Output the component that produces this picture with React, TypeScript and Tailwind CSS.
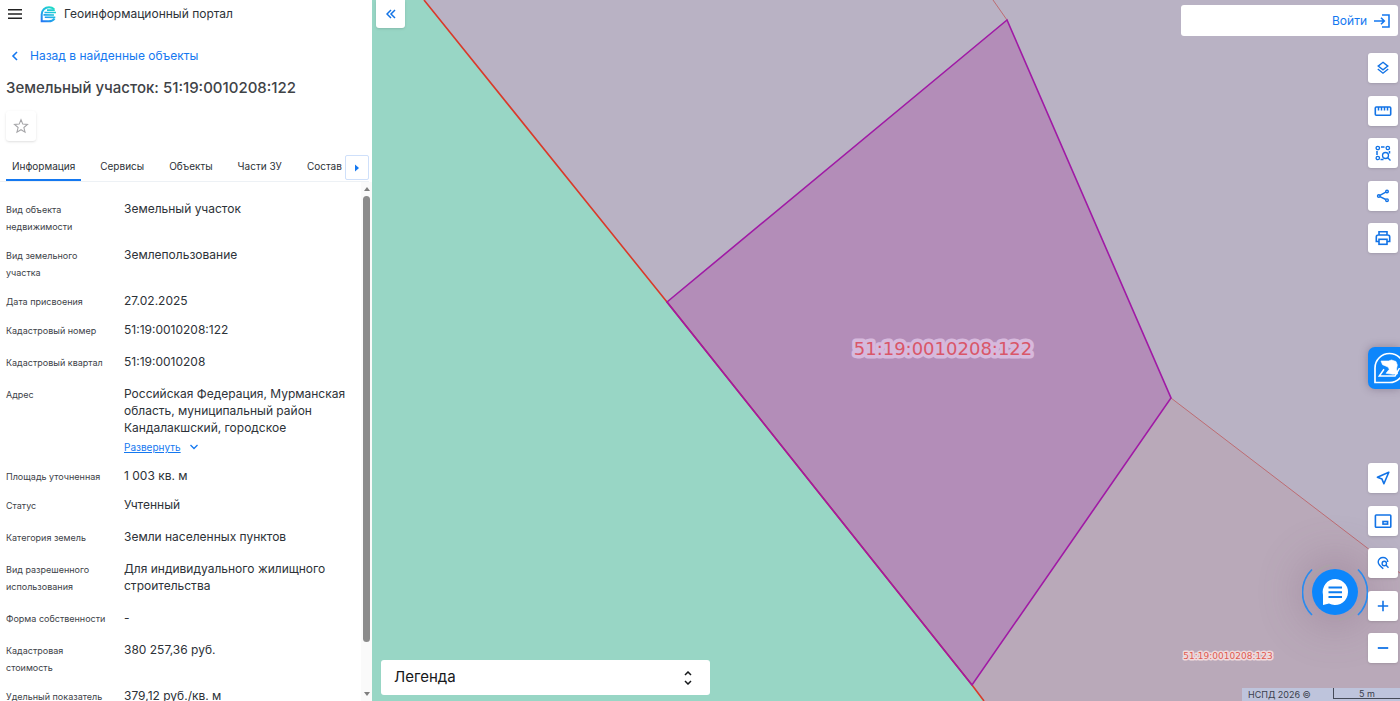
import type { ReactNode } from 'react';

const FONT = "font-['Inter','Noto_Sans',sans-serif]";

type Row = { label: string; value: string; height: string; more?: boolean };

const rows: Row[] = [
  { label: 'Вид объекта недвижимости', value: 'Земельный участок', height: 'min-h-[46px]' },
  { label: 'Вид земельного участка', value: 'Землепользование', height: 'min-h-[46px]' },
  { label: 'Дата присвоения', value: '27.02.2025', height: 'min-h-[29px]' },
  { label: 'Кадастровый номер', value: '51:19:0010208:122', height: 'min-h-8' },
  { label: 'Кадастровый квартал', value: '51:19:0010208', height: 'min-h-8' },
  {
    label: 'Адрес',
    value: 'Российская Федерация, Мурманская область, муниципальный район Кандалакшский, городское',
    height: 'min-h-[82px]',
    more: true,
  },
  { label: 'Площадь уточненная', value: '1 003 кв. м', height: 'min-h-[29px]' },
  { label: 'Статус', value: 'Учтенный', height: 'min-h-8' },
  { label: 'Категория земель', value: 'Земли населенных пунктов', height: 'min-h-8' },
  {
    label: 'Вид разрешенного использования',
    value: 'Для индивидуального жилищного строительства',
    height: 'min-h-[49px]',
  },
  { label: 'Форма собственности', value: '-', height: 'min-h-8' },
  { label: 'Кадастровая стоимость', value: '380 257,36 руб.', height: 'min-h-[46px]' },
  { label: 'Удельный показатель', value: '379,12 руб./кв. м', height: 'min-h-[46px]' },
];

const tabs = ['Информация', 'Сервисы', 'Объекты', 'Части ЗУ', 'Состав'];

function Stroke({ children, className = 'size-5', width = 1.5 }: { children: ReactNode; className?: string; width?: number }) {
  return (
    <svg viewBox="0 0 20 20" className={className} fill="none" stroke="currentColor" strokeWidth={width} aria-hidden="true">
      {children}
    </svg>
  );
}

function Logo() {
  return (
    <svg viewBox="0 0 17 17" className="size-[17px] shrink-0" fill="none" aria-hidden="true">
      <defs>
        <linearGradient id="logo" x1="14" y1="1" x2="3" y2="16" gradientUnits="userSpaceOnUse">
          <stop offset="0" stopColor="#1fe0c0" />
          <stop offset="0.5" stopColor="#20b5e6" />
          <stop offset="1" stopColor="#2478f5" />
        </linearGradient>
      </defs>
      <path d="M14.2 3.2C12.8 1.9 11 1.200 9 1.200 4.900 1.200 1.700 4.300 1.700 8.500V15.300H8.800C11.300 15.300 13.300 14.300 14.600 12.600" stroke="url(#logo)" strokeWidth="2" />
      <path d="M7 4.100 14.800 4.150M4.500 6.500 16 6.550M3.500 8.900 14 8.950M4.800 11.300 15.300 11.350" stroke="url(#logo)" strokeWidth="1.600" />
    </svg>
  );
}

const topTools: { label: string; icon: ReactNode }[] = [
  {
    label: 'Слои',
    icon: (
      <Stroke width={1.4}>
        <path d="M10 4.300 14.800 8.100 10 11.900 5.200 8.100ZM4.800 11 10 15.200 15.200 11" />
      </Stroke>
    ),
  },
  {
    label: 'Измерения',
    icon: (
      <Stroke width={1.6}>
        <rect x="2.300" y="6" width="15.400" height="8.300" rx="1" />
        <path d="M5.500 6V9.500M8.500 6V9.500M11.500 6V9.500M14.500 6V9.500" strokeWidth="1.500" />
      </Stroke>
    ),
  },
  {
    label: 'Поиск по области',
    icon: (
      <Stroke width={1.3}>
        <circle cx="4.800" cy="5" r="1.700" />
        <circle cx="14.800" cy="5" r="1.700" />
        <circle cx="4.800" cy="15" r="1.700" />
        <path d="M8 4H11.500M4 8V12M16.500 8V10.500M7.500 16.500H10.500" strokeWidth="1.500" />
        <circle cx="12.500" cy="12.500" r="3" />
        <path d="M14.700 14.700 17.500 17.500" />
      </Stroke>
    ),
  },
  {
    label: 'Поделиться',
    icon: (
      <Stroke width={1.4}>
        <circle cx="5.800" cy="10" r="1.300" />
        <circle cx="14" cy="5.500" r="1.300" />
        <circle cx="14" cy="14.200" r="1.300" />
        <path d="M6.900 9.300 12.800 6.200M6.900 10.700 12.800 13.500" />
      </Stroke>
    ),
  },
  {
    label: 'Печать',
    icon: (
      <Stroke width={1.6}>
        <path d="M6 7V3.700H14V7M6 13.500H3.300V9C3.300 7.700 4 7 5.200 7H14.800C16 7 16.700 7.700 16.700 9V13.500H14" />
        <rect x="6" y="11.300" width="8" height="5" />
      </Stroke>
    ),
  },
];

const bottomTools: { label: string; icon: ReactNode }[] = [
  {
    label: 'Моё местоположение',
    icon: (
      <Stroke width={1.6}>
        <path d="M15.800 4.300 4.400 9.200 9 11.100 10.900 15.700Z" strokeLinejoin="round" />
      </Stroke>
    ),
  },
  {
    label: 'Обзорная карта',
    icon: (
      <Stroke width={1.6}>
        <rect x="2.400" y="4" width="15.400" height="12.300" rx="0.800" />
        <rect x="10" y="10.500" width="4.600" height="2.600" />
      </Stroke>
    ),
  },
  {
    label: 'Поиск на карте',
    icon: (
      <Stroke width={1.4}>
        <path d="M10.300 15.700C8.500 14.300 5.200 12 5.200 9.100 5.200 6.400 7.400 4.500 10 4.500S14.800 6.400 14.800 9.100" />
        <circle cx="11.300" cy="10.500" r="2.200" />
        <path d="M12.900 12.100 15.500 14.800" />
      </Stroke>
    ),
  },
  {
    label: 'Приблизить',
    icon: (
      <Stroke width={1.6}>
        <path d="M10 4.800V15.200M4.800 10H15.200" />
      </Stroke>
    ),
  },
  {
    label: 'Отдалить',
    icon: (
      <Stroke width={1.800}>
        <path d="M4.800 10H15.200" />
      </Stroke>
    ),
  },
];

function ToolButton({ label, children }: { label: string; children: ReactNode }) {
  return (
    <button
      type="button"
      aria-label={label}
      className="flex size-[30px] items-center justify-center rounded-[3px] bg-white text-[#1273e6] shadow-sm"
    >
      {children}
    </button>
  );
}

function Sidebar() {
  return (
    <aside className="flex h-full w-[372px] shrink-0 flex-col bg-white text-[#2d3238]">
      <header className="flex h-7 shrink-0 items-center pl-2">
        <button type="button" aria-label="Меню" className="mr-[18px] text-[#222]">
          <svg viewBox="0 0 14 10" className="h-[10px] w-[14px]" fill="currentColor" aria-hidden="true">
            <path d="M0 0H14V1.600H0ZM0 4.200H14V5.800H0ZM0 8.400H14V10H0Z" />
          </svg>
        </button>
        <Logo />
        <span className="ml-[7px] text-[12px] leading-5">Геоинформационный портал</span>
      </header>

      <a href="#results" className="mt-[18px] flex h-5 shrink-0 items-center pl-[11px] text-[12px] leading-5 text-[#1478f0]">
        <svg viewBox="0 0 8 10" className="mr-[11px] h-[10px] w-2" fill="none" stroke="currentColor" strokeWidth="1.600" aria-hidden="true">
          <path d="M6 1 2 5 6 9" />
        </svg>
        Назад в найденные объекты
      </a>

      <h1 className="mt-[10px] shrink-0 pl-[6px] text-[15px] leading-6 font-medium text-[#3f4347]">
        Земельный участок: 51:19:0010208:122
      </h1>

      <button
        type="button"
        aria-label="В избранное"
        className="mt-[11px] ml-[6px] flex size-[30px] shrink-0 items-center justify-center rounded-[3px] bg-white text-[#a5a5a8] shadow-sm"
      >
        <svg viewBox="0 0 20 20" className="size-[18px]" fill="none" stroke="currentColor" strokeWidth="1.200" aria-hidden="true">
          <path d="M10 3 12 7.900 17.200 8.300 13.200 11.700 14.500 16.900 10 14.100 5.500 16.900 6.800 11.700 2.800 8.300 8 7.900Z" />
        </svg>
      </button>

      <div className="mt-[13px] mr-[3px] flex h-7 shrink-0 items-stretch border-b border-[#edf1f5]">
        <div role="tablist" className="flex flex-1 items-stretch overflow-hidden pl-[6px] text-[10px] leading-4 whitespace-nowrap">
          {tabs.map((tab, i) => (
            <button
              key={tab}
              type="button"
              role="tab"
              aria-selected={i === 0}
              className={
                i === 0
                  ? 'mr-[13px] shrink-0 border-b-2 border-[#1478f0] px-[6px] pb-[2px]'
                  : 'mr-[13px] shrink-0 border-b-2 border-transparent px-[6px] pb-[2px]'
              }
            >
              {tab}
            </button>
          ))}
        </div>
        <button
          type="button"
          aria-label="Следующие вкладки"
          className="mt-[1px] mb-[1px] flex w-6 shrink-0 items-center justify-center rounded-[2px] border border-[#cfe0fa] text-[#1478f0]"
        >
          <svg viewBox="0 0 4 8" className="h-[8px] w-1" fill="currentColor" aria-hidden="true">
            <path d="M0 0.500 4 4 0 7.500Z" />
          </svg>
        </button>
      </div>

      <div className="flex min-h-0 flex-1">
        <dl className="min-w-0 flex-1 overflow-hidden pt-[18px] pl-[6px]">
          {rows.map((row) => (
            <div key={row.label} className={`flex items-start ${row.height}`}>
              <dt className="mt-px w-[118px] shrink-0 pr-3 text-[9px] leading-[17px] text-[#3d4248]">{row.label}</dt>
              <dd className="min-w-0 flex-1 pr-2 text-[12px] leading-[17px]">
                {row.value}
                {row.more && (
                  <button type="button" className="mt-[3px] flex items-center text-[10px] leading-4 text-[#1478f0]">
                    <span className="underline">Развернуть</span>
                    <svg viewBox="0 0 10 8" className="ml-2 h-2 w-[10px]" fill="none" stroke="currentColor" strokeWidth="1.300" aria-hidden="true">
                      <path d="M1.500 2 5 5.500 8.500 2" />
                    </svg>
                  </button>
                )}
              </dd>
            </div>
          ))}
        </dl>
        <div className="flex w-[11px] shrink-0 flex-col items-center bg-[#fafafa] pt-[5px] pb-[5px]" aria-hidden="true">
          <svg viewBox="0 0 6 4" className="h-1 w-[6px] shrink-0" fill="#7f7f7f">
            <path d="M0 4 3 0 6 4Z" />
          </svg>
          <div className="mt-[5px] w-[7px] grow-[9] rounded-full bg-[#8b8b8b]" />
          <div className="grow" />
          <svg viewBox="0 0 6 4" className="h-1 w-[6px] shrink-0" fill="#7f7f7f">
            <path d="M0 0 3 4 6 0Z" />
          </svg>
        </div>
      </div>
    </aside>
  );
}

function ParcelMap() {
  return (
    <svg
      viewBox="0 0 1028 701"
      preserveAspectRatio="xMidYMid slice"
      className="absolute inset-0 h-full w-full"
      role="img"
      aria-label="Карта земельных участков"
    >
      <rect width="1028" height="701" fill="#b9b2c4" />
      <path d="M799 398 1028 573V701H612L600 685Z" fill="#b9a9b9" />
      <path d="M0 0H52L295 302 600 685 612 701H0Z" fill="#98d6c5" />
      <path d="M621 0 635 20M799 398 1028 573" stroke="#bd6c72" strokeWidth="1" fill="none" />
      <path d="M635 20 295 302 600 685 799 398Z" fill="#b38db8" />
      <path d="M52 0 295 302 600 685 612 701" stroke="#d93a2b" strokeWidth="1.600" fill="none" />
      <path d="M635 20 295 302 600 685 799 398Z" fill="none" stroke="#a01aa5" strokeWidth="1.600" />
      <g className="font-['DejaVu_Sans',sans-serif]" textAnchor="middle" strokeLinejoin="round">
        <text x="571" y="355" fontSize="18" fill="#d95668" stroke="#d6b9dc" strokeWidth="7" paintOrder="stroke">
          51:19:0010208:122
        </text>
        <text x="856" y="659" fontSize="9" fill="#e05a50" stroke="#eedadd" strokeWidth="3" paintOrder="stroke">
          51:19:0010208:123
        </text>
      </g>
    </svg>
  );
}

export default function App() {
  return (
    <div className={`flex h-screen w-full overflow-hidden bg-white ${FONT}`}>
      <Sidebar />
      <main className="relative min-w-0 flex-1 overflow-hidden">
        <ParcelMap />

        <div className="absolute right-[42px] bottom-[86px] size-[46px] rounded-full shadow-[0_0_44px_12px_rgba(120,85,115,0.3)]" />

        <div className="absolute inset-0 flex justify-between">
          <div className="flex flex-col justify-between pb-[6px] pl-1">
            <button
              type="button"
              aria-label="Свернуть панель"
              className="flex h-7 w-[29px] items-center justify-center rounded-b-[3px] bg-white text-[#1273e6] shadow-sm"
            >
              <svg viewBox="0 0 10 10" className="size-[10px]" fill="none" stroke="currentColor" strokeWidth="1.500" aria-hidden="true">
                <path d="M5 1 1 5 5 9M9 1 5 5 9 9" />
              </svg>
            </button>
            <button
              type="button"
              className="ml-[5px] flex h-[35px] w-[329px] items-center justify-between rounded-[3px] bg-white pr-[17px] pl-[13px] text-[15px] text-[#16181b]"
            >
              Легенда
              <svg viewBox="0 0 10 14" className="h-[14px] w-[10px]" fill="none" stroke="currentColor" strokeWidth="1.500" aria-hidden="true">
                <path d="M2 4 5 1 8 4M2 10 5 13 8 10" />
              </svg>
            </button>
          </div>

          <div className="flex flex-col items-end pt-[5px]">
            <a
              href="#login"
              className="mr-[2px] flex h-[31px] w-[217px] shrink-0 items-center justify-end gap-[7px] rounded-[3px] bg-white pr-2 text-[12px] text-[#1478f0]"
            >
              Войти
              <svg viewBox="0 0 16 14" className="h-[14px] w-4" fill="none" stroke="currentColor" strokeWidth="1.600" aria-hidden="true">
                <path d="M8 1H15V13H8M0 7H10M7 3.700 10.300 7 7 10.300" />
              </svg>
            </a>
            <div className="mt-[17px] mr-[2px] flex h-[200px] shrink-0 flex-col justify-between">
              {topTools.map((t) => (
                <ToolButton key={t.label} label={t.label}>
                  {t.icon}
                </ToolButton>
              ))}
            </div>
            <button
              type="button"
              aria-label="Помощник"
              className="mt-[94px] flex h-[42px] w-8 shrink-0 items-center overflow-hidden rounded-l-[7px] bg-[#0d86fb] pl-[5px] text-white shadow-[0_0_8px_rgba(60,40,70,0.35)]"
            >
              <svg viewBox="0 0 32 32" className="size-8 shrink-0" fill="none" stroke="currentColor" aria-hidden="true">
                <path d="M2 30.500V16A14.500 14.500 0 1 1 16.500 30.500Z" strokeWidth="1.700" />
                <path d="M11 17.300 6.300 24H22L26.500 16" strokeWidth="1.500" />
                <path d="M8 9 15.500 9 18.500 8 23 9.500 24.300 13 23.500 17 24.600 22 20 22.300 13 21.300 16.300 17.300 15 15 9.500 12.700Z" fill="currentColor" strokeWidth="0.600" strokeLinejoin="round" />
              </svg>
            </button>
            <div className="flex-1" />
            <div className="mr-[2px] mb-[25px] flex h-[200px] shrink-0 flex-col justify-between">
              {bottomTools.map((t) => (
                <ToolButton key={t.label} label={t.label}>
                  {t.icon}
                </ToolButton>
              ))}
            </div>
            <footer className="flex h-[13px] w-[158px] shrink-0 items-center justify-between bg-[#bec4dc] pl-[6px] text-[9px] leading-[13px] text-[#3a3f4c]">
              <span>НСПД 2026 ©</span>
              <span className="mb-[2px] h-[11px] w-[67px] self-end border-b border-l border-[#454a58] text-center leading-[11px]">5 m</span>
            </footer>
          </div>
        </div>

        <button
          type="button"
          aria-label="Чат поддержки"
          className="absolute right-[32px] bottom-[76px] flex size-[66px] items-center justify-center rounded-full"
        >
          <svg viewBox="0 0 66 66" className="size-[66px]" fill="none" aria-hidden="true">
            <circle cx="33" cy="33" r="23" fill="#0d86fb" />
            <path d="M10 10.500A32 32 0 0 0 10 56M56 10.500A32 32 0 0 1 56 56" stroke="#2a8bee" strokeWidth="1.700" />
            <path d="M6.500 25A28 28 0 0 1 30 6M37 61A28 28 0 0 0 60 40" stroke="#aaa3a7" strokeWidth="1.500" />
            <path d="M33.500 20A13 13 0 1 1 27 44.500L21 46 21 36A13 13 0 0 1 33.500 20Z" fill="#fff" />
            <path d="M26.500 28.500H40M26.500 33.300H40M26.500 38H40" stroke="#0d7df0" strokeWidth="1.900" />
          </svg>
        </button>
      </main>
    </div>
  );
}
